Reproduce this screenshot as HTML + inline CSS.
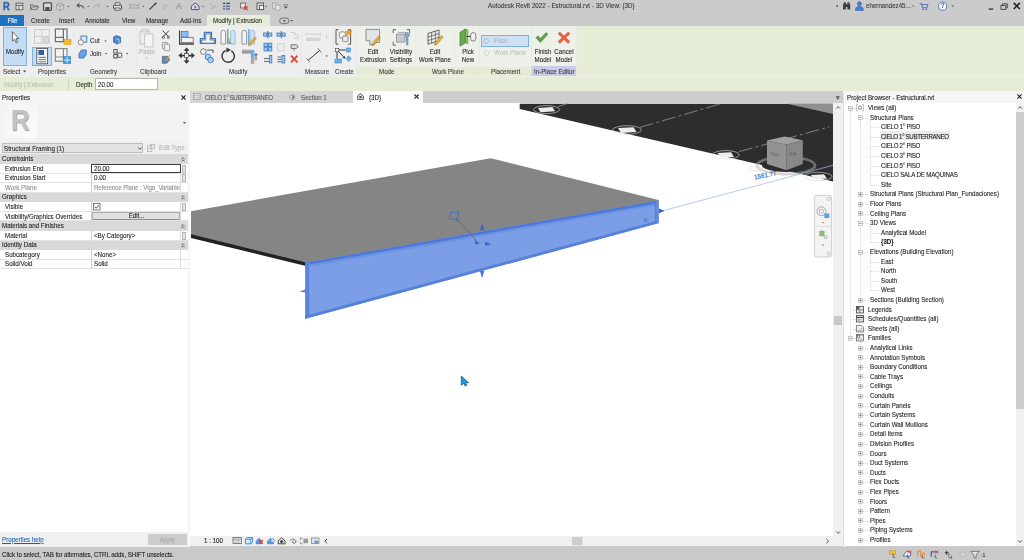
<!DOCTYPE html>
<html lang="en">
<head>
<meta charset="utf-8">
<title>Autodesk Revit 2022 - Estructural.rvt - 3D View: {3D}</title>
<style>
*{box-sizing:border-box;margin:0;padding:0}
html,body{width:1024px;height:560px;overflow:hidden}
body{position:relative;background:#cacaca;font-family:"Liberation Sans","DejaVu Sans",sans-serif;font-size:6.7px;color:#2a2a2a;line-height:8px;-webkit-text-stroke:0.1px}
.x{display:inline-block;transform:scaleX(.925);transform-origin:0 50%}
.xc{display:inline-block;transform:scaleX(.925);transform-origin:50% 50%}
.a{position:absolute;white-space:nowrap}
svg{position:absolute;overflow:visible}
#pb,#props,#status,#vtabs,#vctl,#top{will-change:transform}
#title{left:0;top:0;width:1024px;height:15px;background:#cbcbcb}
#tabs{left:0;top:15px;width:1024px;height:11px;background:#cbcbcb}
#file{left:0;width:24px;height:11px;background:#1b72c4;color:#fff;text-align:center;padding-top:1.5px}
#ctxtab{left:207px;width:63px;height:11px;background:#e7eed8;padding:1.5px 0 0 5.5px}
#ribbon{left:0;top:26px;width:1024px;height:50px;background:#eeeeee}
#ctxbody{left:357px;top:0;width:220px;height:41px;background:#eef1e9}
#ctxlab{left:357px;top:41px;width:667px;height:9px;background:#e5ecd5}
#ctxrest{left:577px;top:0;width:447px;height:50px;background:#e6edd6}
#inplace{left:531px;top:40px;width:45px;height:10px;background:#c9cbe9}
#opts{left:0;top:76px;width:1024px;height:15px;background:#e6edd6;border-top:0.8px solid #eef1e6}
/* properties palette */
#props{left:0;top:91px;width:188px;height:456px;background:#fff}
#props .hd{left:0;top:0;width:188px;height:12px;background:#f5f5f5}
#props .type{left:0;top:12px;width:188px;height:38px;background:#f3f3f3}
#props .sel{left:0;top:50px;width:188px;height:13.4px;background:#f0f0f0}
#props .combo{left:1.6px;top:2.4px;width:141px;height:10px;background:#e2e2e2;border:0.8px solid #bdbdbd;padding:0.4px 0 0 1.6px;color:#1e1e1e}
.grp{left:0;width:188px;height:9.57px;background:#d9d9d9;padding:0.8px 0 0 2px;color:#1e1e1e}
.row{left:0;width:188px;height:9.57px;border-bottom:0.8px solid #e2e2e2;color:#1e1e1e}
.row .k{left:4.6px;top:0.8px;transform:scaleX(.925);transform-origin:0 50%}
.row .v{left:91px;top:0;width:90px;height:9.57px;border-left:0.8px solid #cfcfcf;border-right:0.8px solid #dcdcdc;padding:0.8px 0 0 2px}
.row.dis,.row.dis .k{color:#8e8e8e}
.chev{left:180.6px;top:2.2px;width:4px;height:5px}
.sb{left:182.4px;width:4px;background:#e6e6e6;border:0.6px solid #b4b4b4}
#pfoot{left:0;top:441px;width:188px;height:15px;background:#f0f0f0}
/* view */
#vtabs{left:190px;top:91px;width:653px;height:12px;background:#cdcdcd}
.vt{top:0;height:12px;background:#d5d5d5;color:#5a5a5a}
#view{left:190px;top:103px;width:643.4px;height:433.6px;background:#fff;overflow:hidden}
#vctl{left:190px;top:536.4px;width:652.6px;height:10.2px;background:#f0f0f0}
#vscroll{left:833.4px;top:103px;width:9.2px;height:433.4px;background:#f0f0f0}
#gap1{left:188px;top:91px;width:2.2px;height:456px;background:#f6f6f6}
#gap2{left:842.8px;top:91px;width:2.4px;height:456px;background:linear-gradient(90deg,#e0e0e0 0,#e0e0e0 55%,#fff 55%)}
/* project browser */
#pb{left:845px;top:91px;width:179px;height:454.6px;background:#fff;overflow:hidden}
#pb .hd{left:0;top:0;width:179px;height:11.6px;background:#f6f6f6}
.tr{left:0;height:9.6px;width:171px;color:#1e1e1e}
.tr span{position:absolute;top:1.1px;white-space:nowrap;transform:scaleX(.925);transform-origin:0 50%}
.l1{left:22.8px}.l2{left:25.2px}.l3{left:35.8px}
.bx{top:2.800px;width:4.800px;height:4.800px}
.dot{position:absolute;top:5px;height:0;border-top:0.6px dotted #d6d6d6}
.vd{position:absolute;width:0;border-left:0.6px dotted #dadada}
#status{left:0;top:546.6px;width:1024px;height:13.4px;background:#c9c9c9}
</style>
</head>
<body>
<div id="top" class="a" style="left:0;top:0;width:1024px;height:91px"><div id="title" class="a"></div><div id="tabs" class="a"></div>
<div id="file" class="a" style="top:15px"><span class="xc">File</span></div>
<div id="ctxtab" class="a" style="top:15px"><span class="x">Modify | Extrusion</span></div>
<span class="a x " style="left:30.5px;top:16.6px;color:#2b2b2b">Create</span>
<span class="a x " style="left:59px;top:16.6px;color:#2b2b2b">Insert</span>
<span class="a x " style="left:85px;top:16.6px;color:#2b2b2b">Annotate</span>
<span class="a x " style="left:122px;top:16.6px;color:#2b2b2b">View</span>
<span class="a x " style="left:146px;top:16.6px;color:#2b2b2b">Manage</span>
<span class="a x " style="left:180px;top:16.6px;color:#2b2b2b">Add-Ins</span>
<span class="a x " style="left:488px;top:2.0px;color:#3a3a3a;letter-spacing:0.04px">Autodesk Revit 2022 - Estructural.rvt - 3D View: {3D}</span>
<span class="a x " style="left:866px;top:2.2px;color:#3a3a3a">ehernandez45...</span>
<span class="a " style="left:3px;top:1.6px;font-size:11px;font-weight:bold;color:#2f6db5;-webkit-text-stroke:0.5px #2f6db5;line-height:8px;transform:scaleX(.85);transform-origin:0 0">R</span>
<span class="a x " style="left:175.5px;top:2.0px;font-size:9px;color:#8a8a8a">A</span>
<div id="ribbon" class="a"><div id="ctxbody" class="a"></div><div id="ctxrest" class="a"></div><div id="ctxlab" class="a"></div><div id="inplace" class="a"></div></div>
<div id="opts" class="a"></div>
<div class="a" style="left:3.4px;top:27.4px;width:24px;height:38.8px;background:#c4dcf4;border:0.8px solid #7db1e6"></div>
<span class="a xc " style="left:-14.6px;width:60px;text-align:center;top:48.0px;">Modify</span>
<div class="a" style="left:32px;top:46.8px;width:20.4px;height:18.8px;background:#c4dcf4;border:0.8px solid #7db1e6"></div>
<span class="a x " style="left:90px;top:36.8px;">Cut</span>
<span class="a x " style="left:90px;top:49.6px;">Join</span>
<span class="a xc " style="left:116.80000000000001px;width:60px;text-align:center;top:47.8px;color:#b4b4b4">Paste</span>
<span class="a xc " style="left:342.8px;width:60px;text-align:center;top:48.2px;">Edit</span>
<span class="a xc " style="left:342.8px;width:60px;text-align:center;top:56.0px;">Extrusion</span>
<span class="a xc " style="left:371.2px;width:60px;text-align:center;top:48.2px;">Visibility</span>
<span class="a xc " style="left:371.2px;width:60px;text-align:center;top:56.0px;">Settings</span>
<span class="a xc " style="left:404.8px;width:60px;text-align:center;top:48.2px;">Edit</span>
<span class="a xc " style="left:404.8px;width:60px;text-align:center;top:56.0px;">Work Plane</span>
<span class="a xc " style="left:438.3px;width:60px;text-align:center;top:48.2px;">Pick</span>
<span class="a xc " style="left:438.3px;width:60px;text-align:center;top:56.0px;">New</span>
<span class="a xc " style="left:512.6px;width:60px;text-align:center;top:48.2px;">Finish</span>
<span class="a xc " style="left:512.6px;width:60px;text-align:center;top:56.0px;">Model</span>
<span class="a xc " style="left:534.3px;width:60px;text-align:center;top:48.2px;">Cancel</span>
<span class="a xc " style="left:534.3px;width:60px;text-align:center;top:56.0px;">Model</span>
<div class="a" style="left:481.2px;top:35.4px;width:47.4px;height:11.4px;background:#cfe0f4;border:0.8px solid #7db1e6"></div>
<span class="a x " style="left:494px;top:37.2px;color:#a9b6c6">Face</span>
<span class="a x " style="left:494.2px;top:48.8px;color:#c0c4bc">Work Plane</span>
<span class="a x " style="left:3.3px;top:68.0px;color:#3c3c3c">Select</span>
<span class="a x " style="left:38px;top:68.0px;color:#3c3c3c">Properties</span>
<span class="a x " style="left:90px;top:68.0px;color:#3c3c3c">Geometry</span>
<span class="a x " style="left:139.5px;top:68.0px;color:#3c3c3c">Clipboard</span>
<span class="a x " style="left:228.5px;top:68.0px;color:#3c3c3c">Modify</span>
<span class="a x " style="left:304.5px;top:68.0px;color:#3c3c3c">Measure</span>
<span class="a x " style="left:334.7px;top:68.0px;color:#3c3c3c">Create</span>
<span class="a x " style="left:378.5px;top:68.0px;color:#3c3c3c">Mode</span>
<span class="a x " style="left:432px;top:68.0px;color:#3c3c3c">Work Plane</span>
<span class="a x " style="left:490.5px;top:68.0px;color:#3c3c3c">Placement</span>
<span class="a x " style="left:533.5px;top:68.0px;color:#3c3c3c">In-Place Editor</span>
<span class="a x " style="left:4px;top:81.0px;color:#b9c0ad">Modify | Extrusion</span>
<div class="a" style="left:68px;top:79px;width:1px;height:11px;background:#cfd6c2"></div>
<span class="a x " style="left:76px;top:81.0px;">Depth</span>
<div class="a" style="left:94.5px;top:78px;width:63.600px;height:12.400px;background:#fff;border:0.8px solid #b5b5b5;padding:2.200px 0 0 2px"><span class="x">20.00</span></div>
<svg style="left:0;top:0" width="1024" height="91" viewBox="0 0 1024 91">
<g fill="none" stroke="#5a5a5a" stroke-width="0.9">
<rect x="16" y="3.2" width="6.8" height="6.6" fill="#e6e6e6"/><path d="M16 5.4h6.8M19 5.4v4.4"/>
<path d="M30.6 9.4v-4.6h2.6l1 1h3.4v1M30.6 9.4l1.8-2.6h6.4l-1.8 2.6z" stroke="#6a6a6a"/>
<rect x="43.6" y="2.8" width="7.8" height="7.6" rx="0.8" stroke="#4c4c5c" stroke-width="1.3" fill="#dcdcdc"/><rect x="45.4" y="7" width="4.2" height="3.4" fill="#4c4c5c" stroke="none"/>
<path d="M56.5 4.6l3.6-1.4 3.6 1.4v4.2l-3.6 1.6-3.6-1.6z M56.5 4.6l3.6 1.4 3.6-1.4M60.1 6v4.4" stroke="#9a9a9a" fill="#d8d8d8"/>
<path d="M83.6 8.6c0-3-3-3.6-6-3.2M79.4 3.4l-2.4 2 2.6 1.8" stroke="#555" stroke-width="1.1"/>
<path d="M93.4 8.6c0-3 3-3.6 6-3.2M97.6 3.4l2.4 2-2.6 1.8" stroke="#b4b4b4" stroke-width="1.1"/>
<rect x="113.6" y="5.2" width="8" height="4" rx="0.8" fill="#e4e4e4" stroke="#4a4a4a" stroke-width="1"/><rect x="115.2" y="2.8" width="4.8" height="2.4" fill="#f4f4f4"/><rect x="115.2" y="8" width="4.8" height="2.2" fill="#f4f4f4"/>
<path d="M130 5h8.600M130 8h8.600M130 3.600v5.400M138.600 3.600v5.400" stroke="#9c9c9c" stroke-width="0.8"/>
<path d="M149.4 9.6l6.4-6.4" stroke="#444" stroke-width="1.3"/><circle cx="155.6" cy="3.6" r="1" fill="#444" stroke="none"/>
<path d="M162.6 9.4l2-5 3 1.4z" stroke="#b0b0b0"/>
<path d="M191.4 6l3.8-3 3.8 3v3.6h-7.6z" stroke="#4a4a4a" fill="#dedede"/><circle cx="195.2" cy="7" r="1.5" fill="#6a8fd0" stroke="none"/>
<path d="M210.4 3.6l3 3-3 3M213.4 6.6h3" stroke="#a6a6a6"/>
<path d="M223 3.4h2.2M226.6 3.4h3.4M223 6.2h2.2M226.6 6.2h3.4M223 9h2.2M226.6 9h3.4" stroke="#3c3c3c" stroke-width="1.1"/><path d="M226.700 2.400v8" stroke="#4a90e0" stroke-width="0.800"/>
<rect x="240.6" y="3" width="5" height="5" stroke="#666" fill="#e4e4e4"/><path d="M244 6.4l3.6 3.6M247.6 6.4l-3.6 3.6" stroke="#d83a2a" stroke-width="1.2"/>
<rect x="257" y="3" width="6.6" height="6.6" stroke="#555" fill="#e2e2e2"/><rect x="259.4" y="5.4" width="4.2" height="4.2" fill="#f4f4f4" stroke="#555"/>
<rect x="272.6" y="3" width="4.6" height="5.4" stroke="#a8a8a8" fill="#dcdcdc"/><rect x="275.4" y="5.2" width="4.6" height="5" stroke="#a8a8a8" fill="#e6e6e6"/>
</g>
<g fill="#555">
<circle cx="68.6" cy="6.4" r="0.7"/>
<circle cx="88.2" cy="6.4" r="0.7"/>
<circle cx="107.4" cy="6.4" r="0.7"/>
<circle cx="143.4" cy="6.4" r="0.7"/>
<circle cx="203" cy="6.4" r="0.7"/>
<circle cx="266.4" cy="6.4" r="0.7"/>
<path d="M283.4 4.4h4.6v0.9h-4.6z M283.6 6.4h4.2l-2.1 2.4z"/>
</g>
<g fill="#3c3c3c">
<path d="M837.6 4.4v3l-1.6-1.5z"/>
<path d="M843 5.4l1-3.2h1.6l0.4 2h1.2l0.4-2h1.6l1 3.2v4.2h-2.8v-2.6h-1.6v2.6h-2.8z"/>
<path d="M912 5.4h2.4l-1.2 1.6zM951.6 5.4h2.4l-1.2 1.6z" fill="#555"/>
<rect x="988.6" y="8.4" width="4.6" height="1.4"/>
<path d="M1013.2 3.4l1.1-1.1 2.5 2.5 2.5-2.5 1.1 1.1-2.5 2.5 2.5 2.5-1.1 1.1-2.5-2.5-2.5 2.5-1.1-1.1 2.5-2.5z" fill="#222"/>
</g>
<g fill="none" stroke="#444" stroke-width="0.9"><rect x="1001" y="5.4" width="4.8" height="4"/><path d="M1002.6 5.4v-1.6h4.8v4h-1.6"/></g>
<circle cx="859.4" cy="3.8" r="2" fill="#4a7fd0" stroke="#2a55a8" stroke-width="0.5"/><path d="M855.4 10.4c0-3.4 2-4.2 4-4.2s4 0.8 4 4.2z" fill="#4a7fd0" stroke="#2a55a8" stroke-width="0.5"/>
<path d="M919.6 3.4h1.6l1.4 4.4h4.4l1-3.2h-6" fill="none" stroke="#3a6ab8" stroke-width="0.9"/><circle cx="923" cy="9.4" r="0.8" fill="#3a6ab8"/><circle cx="926.4" cy="9.4" r="0.8" fill="#3a6ab8"/>
<circle cx="942.6" cy="6.2" r="4.1" fill="#f4f6fa" stroke="#3a62b0" stroke-width="0.8"/><text x="942.6" y="8.400" font-size="6.400" font-weight="bold" fill="#2a5db0" text-anchor="middle">?</text>
<rect x="279.6" y="18" width="9.4" height="5.6" rx="2.8" fill="none" stroke="#555" stroke-width="0.7"/><circle cx="284.3" cy="20.8" r="1" fill="#555"/><path d="M290.6 20h2.4l-1.2 1.6z" fill="#333"/>
<rect x="29.6" y="28" width="0.7" height="47" fill="#e6e6e6"/>
<rect x="73.6" y="28" width="0.7" height="47" fill="#e6e6e6"/>
<rect x="136.4" y="28" width="0.7" height="47" fill="#e6e6e6"/>
<rect x="173.6" y="28" width="0.7" height="47" fill="#e6e6e6"/>
<rect x="300.8" y="28" width="0.7" height="47" fill="#e6e6e6"/>
<rect x="333" y="28" width="0.7" height="47" fill="#e6e6e6"/>
<rect x="356.4" y="28" width="0.7" height="47" fill="#e6e6e6"/>
<rect x="415.4" y="28" width="0.7" height="47" fill="#e6e6e6"/>
<rect x="455.4" y="28" width="0.7" height="47" fill="#e6e6e6"/>
<rect x="479" y="28" width="0.7" height="47" fill="#e6e6e6"/>
<rect x="531" y="28" width="0.7" height="47" fill="#e6e6e6"/>
<rect x="576.4" y="28" width="0.7" height="47" fill="#e6e6e6"/>
<path d="M23 70.4h3.2l-1.6 2.2z" fill="#444"/>
<path d="M12.4 31.6v9.6l2.2-2 1.6 3.6 1.4-0.6-1.6-3.6h3z" fill="#fff" stroke="#444" stroke-width="0.8" stroke-linejoin="round"/>
<g fill="none" stroke="#c4c4c4" stroke-width="0.8"><rect x="34.4" y="29.6" width="14.8" height="13.6" fill="#efefef"/><path d="M34.4 36.4h14.8M41.8 29.6v13.6"/><rect x="43.4" y="37.8" width="5" height="4.4" fill="#dcdcdc"/></g>
<g fill="#f2f2f2" stroke="#6e6e6e" stroke-width="1.2"><rect x="55.4" y="29" width="11.6" height="12.6"/><path d="M55.4 37.4h8M63.4 29v12.6" fill="none"/></g><rect x="64" y="39.4" width="7" height="5" fill="#f4b932" stroke="#d89a18" stroke-width="0.6"/>
<rect x="36.8" y="48.4" width="10.8" height="15.4" fill="#f6f6f6" stroke="#555" stroke-width="0.9"/><rect x="38.4" y="50" width="5.6" height="5" fill="#2f5fa8"/><path d="M38.6 57.4h7.4M38.6 59.6h7.4M38.6 61.8h7.4" stroke="#555" stroke-width="0.8"/>
<g fill="#f2f2f2" stroke="#8a8a8a" stroke-width="1.2"><rect x="55.4" y="48.6" width="11.6" height="12.6"/><path d="M55.4 57h8M63.4 48.6v12.6" fill="none"/></g><rect x="63.6" y="56.6" width="7" height="7" fill="#4a9ae0" stroke="#2a78c8" stroke-width="0.6"/><path d="M67.1 56.6v7M63.6 60.1h7" stroke="#dff" stroke-width="0.8"/>
<rect x="81" y="36" width="5.8" height="6.2" fill="#dce8f6" stroke="#3a78c8" stroke-width="0.9"/><circle cx="80.8" cy="42.4" r="2.6" fill="#f4f4f4" stroke="#666" stroke-width="0.7"/>
<path d="M79 53.6l2.4-3.6h4.8v4.6l-2.4 3.4h-4.8z" fill="#6aa2e0" stroke="#2a68b8" stroke-width="0.8"/>
<path d="M104.4 40.6h2.2l-1.1 1.5z M105 53h2.2l-1.1 1.5z M126 53h2.2l-1.1 1.5z" fill="#444"/>
<path d="M113.6 37l3-1.4 4 1.6v5.4l-3.4 1.4-3.6-1.8z" fill="#4a88d0" stroke="#2a5aa0" stroke-width="0.7"/><path d="M116 38.6l3 1v3.6" stroke="#dfeaf8" fill="none" stroke-width="0.7"/>
<g fill="none" stroke="#444" stroke-width="0.9"><rect x="113.8" y="49.6" width="3.4" height="3.4"/><rect x="113.8" y="54.6" width="3.4" height="3.4"/><rect x="117.8" y="53" width="4" height="4.4" rx="1"/></g>
<g fill="#ededed" stroke="#c2c2c2" stroke-width="0.9"><rect x="140" y="31" width="9.6" height="13"/><rect x="144.6" y="34" width="8.4" height="13" fill="#f4f4f4"/><rect x="142.4" y="29.4" width="4.8" height="2.6"/></g><path d="M145.4 57.4h2.2l-1.1 1.5z" fill="#b8b8b8"/>
<path d="M162.6 30.6l6.4 6.6M169 30.6l-6.4 6.6" stroke="#333" stroke-width="0.9"/><circle cx="163.4" cy="37.4" r="1.1" fill="none" stroke="#333" stroke-width="0.7"/><circle cx="168.4" cy="37.4" r="1.1" fill="none" stroke="#333" stroke-width="0.7"/>
<g fill="#e6e6e6" stroke="#8a8a8a" stroke-width="0.8"><rect x="162.4" y="42.4" width="5" height="6.4" rx="0.6"/><rect x="164.6" y="44.2" width="5" height="6.4" rx="0.6" fill="#f2f2f2"/></g>
<path d="M162.4 56.4h5l2.4 3.4-3 3.4h-4.4z" fill="#5a8ad0" stroke="#444" stroke-width="0.6"/><path d="M166.4 61l3.4-5.6" stroke="#d8a020" stroke-width="1.2"/>
<path d="M179.6 30.4v13.6h14.4" fill="none" stroke="#444" stroke-width="1.3"/><rect x="181.6" y="31.4" width="6.4" height="5.6" fill="#8cc0f0" stroke="#3a78c8" stroke-width="0.7"/><rect x="181.6" y="37.6" width="11.6" height="5" fill="#f4f4f4" stroke="#666" stroke-width="0.8"/>
<path d="M200.4 43.4v-4.8h4v-6.2h7v6.2h4v4.8z" fill="#f2f2f2" stroke="#3a78c8" stroke-width="1.4" stroke-linejoin="round"/><path d="M201.6 43.4v-3.4h4.2v-6.2h4.4v6.2h4.2v3.4" fill="none" stroke="#555" stroke-width="0.7"/>
<path d="M221 44v-11.400a2.300 2.300 0 0 1 4.600 0v11.400z" fill="#f4f4f4" stroke="#8a8a8a" stroke-width="0.900"/><path d="M230.600 44v-11.400a2.300 2.300 0 0 1 4.600 0v11.400z" fill="#cfe2f4" stroke="#9ab8d8" stroke-width="0.900"/><path d="M227.800 29v15.600" stroke="#5aa85a" stroke-width="1.200"/><path d="M229 38.400v5l1.200-1 0.900 1.800" fill="none" stroke="#444" stroke-width="0.600"/>
<path d="M242 44v-11.400a2.300 2.300 0 0 1 4.600 0v11.400z" fill="#f4f4f4" stroke="#8a8a8a" stroke-width="0.900"/><path d="M250 44v-11.400a2.300 2.300 0 0 1 4.600 0v11.400z" fill="#cfe2f4" stroke="#9ab8d8" stroke-width="0.900"/><path d="M248.800 29v15.400" stroke="#5a9ee0" stroke-width="1.200"/><path d="M249 43.800l5.800-6.800 1.600 1.400-5.800 6.800-2.200 0.600z" fill="#f0b030" stroke="#8a6a20" stroke-width="0.400"/>
<g fill="#333"><path d="M186.6 47.4l3 3.4h-6zM186.6 63.8l3-3.4h-6zM178.4 55.6l3.4-3v6zM194.8 55.6l-3.4-3v6z"/><rect x="185.8" y="50" width="1.6" height="11.2"/><rect x="181" y="54.8" width="11.2" height="1.6"/></g><rect x="184.6" y="53.6" width="4" height="4" fill="#f2f2f2" stroke="#333" stroke-width="0.6"/>
<circle cx="203.4" cy="51.6" r="2.8" fill="#f4f4f4" stroke="#555" stroke-width="0.8"/><circle cx="208" cy="57" r="2.8" fill="#a8d0f4" stroke="#3a78c8" stroke-width="0.9"/><circle cx="210.6" cy="60" r="2.8" fill="#a8d0f4" stroke="#3a78c8" stroke-width="0.9"/><path d="M207 50h6v3" fill="none" stroke="#333" stroke-width="0.8"/>
<path d="M231.400 50.800a6.200 6.200 0 1 1 -5.600-0.400" fill="none" stroke="#3c3c3c" stroke-width="1.500"/><path d="M226.400 47.600l4.600 2.400-4.600 2.600z" fill="#3c3c3c"/>
<rect x="242" y="50.800" width="9.400" height="2.800" fill="#9a9a9a"/><path d="M242 50.200h9.400" stroke="#666" stroke-width="0.600"/><rect x="250.800" y="50" width="3.600" height="8" fill="#6ab0e8"/><rect x="250.800" y="58" width="3.600" height="5.800" fill="#a8a8a8"/><path d="M256 60.400v-6.600M254.600 55.400l1.400-1.800 1.400 1.800" stroke="#333" stroke-width="0.800" fill="none"/>
<g stroke-width="0.8">
<rect x="263.6" y="33" width="3.200" height="3.200" fill="#9cc8f4" stroke="#3a78c8"/><rect x="268.600" y="33" width="3.200" height="3.200" fill="#9cc8f4" stroke="#3a78c8"/><path d="M267.800 31v7.400" stroke="#444"/>
<rect x="277" y="33" width="3.200" height="3.200" fill="#9cc8f4" stroke="#3a78c8"/><rect x="282" y="33" width="3.200" height="3.200" fill="#9cc8f4" stroke="#3a78c8"/><path d="M281.200 31v7.400" stroke="#444"/>
<path d="M291 32.400h4v2.400h3v3.400h-4.400" fill="none" stroke="#c6c6c6"/>
<g fill="#9cc8f4" stroke="#3a78c8"><rect x="264" y="43.200" width="3.400" height="3.400"/><rect x="268.400" y="43.200" width="3.400" height="3.400"/><rect x="264" y="47.600" width="3.400" height="3.400"/><rect x="268.400" y="47.600" width="3.400" height="3.400"/></g>
<rect x="277.400" y="43.400" width="7" height="7.400" fill="#ececec" stroke="#cfcfcf"/>
<path d="M291 44.800h5.600l1.400 1.800-1.400 1.800h-5.600z M294 48.400v2.400" fill="#e2e2e2" stroke="#555"/>
<path d="M264 58.600h5M264 61.400h5" stroke="#444"/><rect x="269.400" y="55.400" width="2.400" height="7.600" fill="#9cc8f4" stroke="#3a78c8"/>
<path d="M277.400 57h4M277.400 59.400h4M277.400 61.800h4" stroke="#444"/><rect x="282" y="55.400" width="2.800" height="7.600" fill="#9cc8f4" stroke="#3a78c8"/>
<path d="M291 55.600l6.400 6.800M297.400 55.600l-6.400 6.800" stroke="#e03a2a" stroke-width="1.700"/>
</g>
<path d="M306 34.200h14.400" stroke="#c6c6c6" stroke-width="0.800"/><path d="M306 32.600v3.200M320.400 32.600v3.200" stroke="#c6c6c6" stroke-width="0.700"/><rect x="306" y="37.600" width="14.600" height="3.400" fill="#d4d4d4"/><circle cx="326.600" cy="36.800" r="0.600" fill="#888"/>
<path d="M308.200 60.200l11.600-9.800" stroke="#333" stroke-width="1"/><path d="M306.400 58l3.600 4.400M317.800 48.200l3.600 4.400" stroke="#444" stroke-width="0.700"/><path d="M325.600 55.600h2.200l-1.100 1.500z" fill="#444"/>
<path d="M338.400 29.600h-2.400v14.600h2.400M348.200 29.600h2.400v14.600h-2.400" fill="none" stroke="#555" stroke-width="1"/><circle cx="342.400" cy="35" r="3.400" fill="#f4f4f4" stroke="#777" stroke-width="0.800"/><rect x="342.600" y="36" width="5.400" height="5.600" rx="1" fill="#ececec" stroke="#777" stroke-width="0.800"/><path d="M348.400 29l1.200 2 2.200 0.400-1.600 1.600 0.400 2.200-2.200-1-2 1 0.400-2.200-1.600-1.600 2.200-0.400z" fill="#f4a020" stroke="#e07810" stroke-width="0.400"/>
<rect x="335.400" y="48.400" width="3.400" height="3.400" fill="#f4f4f4" stroke="#555" stroke-width="0.700"/><rect x="346.400" y="48" width="4" height="4" fill="#6ab0ec" stroke="#3a88d0" stroke-width="0.600"/><rect x="335" y="59" width="6.400" height="4" fill="#6ab0ec" stroke="#3a88d0" stroke-width="0.600"/><path d="M348.600 55.800l2.600 2.800-2.600 2.800-2.600-2.800z" fill="#6ab0ec" stroke="#3a88d0" stroke-width="0.600"/><path d="M338.800 50h7M337 52v6.600M338.600 51.600l5.600 6" stroke="#222" stroke-width="0.900"/><path d="M345.400 58.600l-2.800-0.600 2-2z" fill="#222"/>
<path d="M366 29.400h13.600v13h-3.600l-1.600 2.400h-4.600v-4h-3.800z" fill="#e1e4ea" stroke="#777" stroke-width="0.800"/><path d="M372.400 43.400l6.400-7.600 1.800 1.600-6.400 7.400-2.400 0.800z" fill="#f0b030" stroke="#8a6a20" stroke-width="0.500"/>
<g fill="none" stroke="#555" stroke-width="0.900"><path d="M396 29.600h-2.800v3.600M406.800 29.600h2.800v3.600M396 45.200h-2.800v-3.600"/></g><path d="M396.400 34.600l2-2h8v7.400l-2 2h-8z" fill="#d4d8e0" stroke="#888" stroke-width="0.700"/><rect x="396.400" y="34.600" width="8" height="7.400" fill="#c4cad4" stroke="#888" stroke-width="0.500"/><path d="M405.600 36.400a2.200 2.200 0 1 1 3.200 0l-0.800 1v7.600h-1.600v-7.600z" fill="#8aa8cc" stroke="#5a7aa8" stroke-width="0.500"/>
<path d="M428 33.400l11-3.400v10.600l-11 3.600z" fill="#ececec" stroke="#555" stroke-width="0.900"/><path d="M431.600 32.400v10.600M435.400 31.200v10.600M428 37l11-3.400M428 40.600l11-3.400" stroke="#555" stroke-width="0.700"/><path d="M435 42.800l6.400-7.400 1.800 1.600-6.400 7.400-2.400 0.800z" fill="#f0b030" stroke="#8a6a20" stroke-width="0.500"/>
<path d="M460 32.400l5.400-3.400v13.800l-5.400 3.400z" fill="#6aa84f" stroke="#3d7a2a" stroke-width="0.700"/><path d="M465.400 29l2.400 1v13.600l-2.400-0.800z" fill="#8cc46c" stroke="#3d7a2a" stroke-width="0.600"/><path d="M466.600 36.400h4" stroke="#222" stroke-width="0.900"/><rect x="470.600" y="32.600" width="5.200" height="8.400" rx="2.400" fill="#f0f0f0" stroke="#666" stroke-width="0.800"/>
<circle cx="486" cy="41.200" r="2.400" fill="none" stroke="#a9b6c6" stroke-width="0.800"/><circle cx="486.600" cy="52.800" r="2.400" fill="none" stroke="#cdd0c8" stroke-width="0.800"/>
<path d="M535.800 37.800l2.200-2 2.400 2.600 5.600-6 2 1.800-7.600 8.400z" fill="#5d9c48" stroke="#3f7a30" stroke-width="0.400"/>
<path d="M558 33.800l1.800-1.800 4.200 4 4.200-4 1.800 1.800-4.200 3.800 4.200 4-1.800 1.800-4.200-4-4.200 4-1.800-1.800 4.200-4z" fill="#e8603c" stroke="#c84424" stroke-width="0.400"/>
</svg>
</div>
<div id="props" class="a">
<div class="a hd"><span class="a x" style="left:2px;top:2.8px;color:#1e1e1e">Properties</span>
<svg style="left:180.800px;top:4.200px" width="5" height="5" viewBox="0 0 5 5"><path d="M0.4 0.4L4.6 4.600M4.600 0.400L0.400 4.600" stroke="#222" stroke-width="1.1"/></svg></div>
<div class="a type"><div class="a" style="left:4px;top:1.800px;width:33.400px;height:33.400px;background:linear-gradient(135deg,#f4f4f4,#fbfbfb)"></div>
<span class="a" style="left:11.400px;top:4.800px;font-size:30px;line-height:24px;font-weight:bold;color:#c2c2c2;transform:scaleX(.86);transform-origin:0 0;text-shadow:0.6px 0.6px 1px #999">R</span>
<svg style="left:183px;top:19px" width="3" height="2" viewBox="0 0 3 2"><path d="M0 0h3L1.500 2z" fill="#555"/></svg></div>
<div class="a sel"><div class="a combo"><span class="x">Structural Framing (1)</span></div>
<svg style="left:137.600px;top:6px" width="4" height="3" viewBox="0 0 4 3"><path d="M0.300 0.500L2 2.300 3.700 0.500" fill="none" stroke="#333" stroke-width="0.800"/></svg>
<svg style="left:147.400px;top:3.400px" width="8" height="8" viewBox="0 0 8 8"><g fill="none" stroke="#b9b9b9" stroke-width="0.800"><rect x="0.400" y="1.400" width="4.400" height="6"/><rect x="3.400" y="0.400" width="4.200" height="4"/><path d="M0.400 4.400h4.400"/></g></svg>
<span class="a x" style="left:158.600px;top:3.200px;color:#b4b4b4">Edit Type</span></div>
<div class="a grp" style="top:63.40px"><span class="x">Constraints</span><svg class="chev" viewBox="0 0 4 5"><path d="M0.4 2.2L2 0.6 3.600 2.200M0.400 4.400L2 2.800 3.600 4.400" fill="none" stroke="#333" stroke-width="0.7"/></svg></div>
<div class="a row" style="top:72.97px"><span class="a k">Extrusion End</span><span class="a v"><span class="x"></span></span></div>
<div class="a row" style="top:82.54px"><span class="a k">Extrusion Start</span><span class="a v"><span class="x">0.00</span></span></div>
<div class="a row dis" style="top:92.11px"><span class="a k">Work Plane</span><span class="a v"><span class="x"><span style="letter-spacing:-0.12px">Reference Plane : Viga_Variable</span></span></span></div>
<div class="a grp" style="top:101.68px"><span class="x">Graphics</span><svg class="chev" viewBox="0 0 4 5"><path d="M0.4 2.2L2 0.6 3.600 2.200M0.400 4.400L2 2.800 3.600 4.400" fill="none" stroke="#333" stroke-width="0.7"/></svg></div>
<div class="a row" style="top:111.25px"><span class="a k">Visible</span><span class="a v"><span class="x"></span></span></div>
<div class="a row" style="top:120.82px"><span class="a k">Visibility/Graphics Overrides</span><span class="a v"><span class="x"></span></span></div>
<div class="a grp" style="top:130.39px"><span class="x">Materials and Finishes</span><svg class="chev" viewBox="0 0 4 5"><path d="M0.4 2.2L2 0.6 3.600 2.200M0.400 4.400L2 2.800 3.600 4.400" fill="none" stroke="#333" stroke-width="0.7"/></svg></div>
<div class="a row" style="top:139.96px"><span class="a k">Material</span><span class="a v"><span class="x">&lt;By Category&gt;</span></span></div>
<div class="a grp" style="top:149.53px"><span class="x">Identity Data</span><svg class="chev" viewBox="0 0 4 5"><path d="M0.4 2.2L2 0.6 3.600 2.200M0.400 4.400L2 2.800 3.600 4.400" fill="none" stroke="#333" stroke-width="0.7"/></svg></div>
<div class="a row" style="top:159.10px"><span class="a k">Subcategory</span><span class="a v"><span class="x">&lt;None&gt;</span></span></div>
<div class="a row" style="top:168.67px"><span class="a k">Solid/Void</span><span class="a v"><span class="x">Solid</span></span></div>
<div class="a" style="left:91.400px;top:72.77px;width:89.200px;height:9.400px;border:0.9px solid #3c3c3c;background:#fff;padding:0.4px 0 0 1.4px;color:#1e1e1e"><span class="x">20.00</span></div>
<div class="a sb" style="top:73.57px;height:8px"></div><div class="a sb" style="top:83.14px;height:8px"></div>
<div class="a sb" style="top:112.25px;height:7.600px"></div><div class="a sb" style="top:140.96px;height:7.600px"></div>
<svg style="left:93.400px;top:112.35px" width="7.400" height="7.400" viewBox="0 0 7.400 7.400"><rect x="0.400" y="0.400" width="6.600" height="6.600" fill="#fff" stroke="#444" stroke-width="0.700"/><path d="M1.700 3.700l1.500 1.600 2.700-3.300" fill="none" stroke="#333" stroke-width="0.800"/></svg>
<div class="a" style="left:92px;top:121.22px;width:88.400px;height:8.200px;background:#e1e1e1;border:0.7px solid #adadad;border-bottom-color:#8e8e8e;text-align:center;line-height:6px;color:#1e1e1e"><span class="xc">Edit...</span></div>
<div id="pfoot" class="a"><span class="a x" style="left:2px;top:3.800px;color:#1a5fb4;text-decoration:underline">Properties help</span><div class="a" style="left:148px;top:2px;width:38.600px;height:11.400px;background:#cccccc;color:#a4a4a4;text-align:center;padding-top:1.800px"><span class="xc">Apply</span></div></div>
</div>
<div id="gap1" class="a"></div>
<div id="vtabs" class="a">
<div class="a vt" style="left:0;width:95.600px"><span class="a x" style="left:14.800px;top:2.600px;letter-spacing:-0.4px">CIELO 1° SUBTERRANEO</span>
<svg style="left:3.200px;top:2.400px" width="7.600" height="7" viewBox="0 0 7.600 7"><rect x="0.400" y="0.400" width="6.800" height="6.200" fill="#dcdcdc" stroke="#9a9a9a" stroke-width="0.700"/><path d="M0.400 2.400h6.800M0.400 4.400h6.800" stroke="#aaa" stroke-width="0.500"/></svg></div>
<div class="a vt" style="left:96.200px;width:66.600px"><span class="a x" style="left:14.400px;top:2.600px">Section 1</span>
<svg style="left:2.400px;top:2.600px" width="6.400" height="6.400" viewBox="0 0 6.400 6.400"><circle cx="3.200" cy="3.200" r="2.500" fill="#e4e4e4" stroke="#8a8a8a" stroke-width="0.700"/><path d="M3.200 0.700L5.700 3.200 3.200 5.700z" fill="#777"/></svg></div>
<div class="a" style="left:163.400px;top:0;width:69.200px;height:12px;background:#fff;color:#1e1e1e"><span class="a x" style="left:15.800px;top:2.600px">{3D}</span>
<svg style="left:3.200px;top:2.400px" width="7" height="7" viewBox="0 0 7 7"><path d="M0.600 3l2.900-2.400L6.400 3v3.400H0.600z" fill="#e8e8e8" stroke="#333" stroke-width="0.800"/><circle cx="3.500" cy="4" r="1.300" fill="#555"/></svg>
<svg style="left:60.400px;top:3.400px" width="5.200" height="5.200" viewBox="0 0 5.200 5.200"><path d="M0.500 0.500L4.700 4.700M4.700 0.500L0.500 4.700" stroke="#222" stroke-width="1.100"/></svg></div>
<svg style="left:646px;top:5px" width="3.600" height="4.400" viewBox="0 0 4 5"><path d="M0 0h4v0.900H0zM0 1.800h4L2 4.400z" fill="#444"/></svg>
</div>
<div id="view" class="a">
<svg style="left:0;top:0" width="643" height="432" viewBox="190 103 643 432">
<!-- far dark slab -->
<polygon points="519.7,103.700 833.400,103.700 833.400,181.5 519.7,109" fill="#2d2d2d"/>
<polygon points="787,103.700 833.400,103.700 833.400,114.2" fill="#909090"/>
<g fill="none" stroke="#d8d8d8" stroke-width="0.6">
<ellipse cx="546.6" cy="109.6" rx="13" ry="4"/>
<ellipse cx="627" cy="130" rx="14.5" ry="4.3"/>
<ellipse cx="725.8" cy="154.8" rx="13.5" ry="4.2"/>
<ellipse cx="818" cy="176.5" rx="14" ry="4.2"/>
</g>
<g fill="#ececec">
<polygon points="538,108 552.5,107 555,111.3 540.5,112.3"/>
<polygon points="618,128 633.5,127.2 636.5,132 621,133"/>
<polygon points="717.5,153 731,152.2 734,157 720.5,157.6"/>
<polygon points="811,175 824,174.2 827,178.6 814,179.4"/>
</g>
<g stroke="#a4a4a4" stroke-width="0.7" stroke-dasharray="14 3 3 3">
<line x1="558" y1="106.6" x2="568" y2="103.4"/>
<line x1="640" y1="127.4" x2="722" y2="103.4"/>
<line x1="739" y1="151.6" x2="829" y2="127"/>
</g>
<!-- view cube -->
<ellipse cx="786" cy="165.5" rx="29" ry="8.5" fill="none" stroke="#b0b0b0" stroke-width="2.8" opacity="0.5"/>
<ellipse cx="786" cy="165.5" rx="24" ry="6.4" fill="#2d2d2d"/>
<polygon points="767,140.5 784.5,136.6 802.8,140.3 786.5,144.8" fill="#a0a0a0"/>
<polygon points="767,140.5 786.5,144.8 786.5,170.2 767,164" fill="#939393"/>
<polygon points="786.5,144.8 802.8,140.3 802.8,164 786.5,170.2" fill="#888888"/>
<text x="769.8" y="155.3" font-size="4.6" font-weight="bold" fill="#6f6f6f" transform="rotate(8 770 155)">TOP</text>
<text x="789.8" y="156" font-size="4.6" font-weight="bold" fill="#6a6a6a" transform="rotate(-10 790 156)">RIE</text>
<!-- white cover below dark edge (compass pieces) -->
<ellipse cx="756" cy="168.5" rx="7" ry="2.4" fill="none" stroke="#e2e2e2" stroke-width="1"/>
<!-- main slab -->
<polygon points="191,211.2 490.7,158.2 658.6,200.1 658.6,201.4 306,264 191,235.2" fill="#858585"/>
<polygon points="191,234.2 306,262.6 306,266 191,238" fill="#222"/>
<!-- beam -->
<polygon points="305.3,262.6 655.4,201 658.7,200.2 658.7,223.2 655.4,224 305.3,318.8" fill="#7b9ee6"/>
<polygon points="305.3,262.6 655.4,201 655.4,204 305.3,265.400" fill="#4f79d8"/>
<polygon points="305.3,265.400 655.4,204 655.4,205.400 305.3,267.600" fill="#6c92e2"/>
<polygon points="305.3,262.6 309.3,262 309.3,317.6 305.3,318.8" fill="#5a83da"/>
<polygon points="305.3,315.800 655.4,221.200 655.4,224 305.3,318.8" fill="#5680da"/>
<polygon points="655.2,201 658.7,200.2 658.7,223.2 655.2,224" fill="#5f88de"/>
<line x1="655.400" y1="201" x2="655.400" y2="224" stroke="#4a74d4" stroke-width="0.600"/>
<circle cx="645.7" cy="220" r="1.5" fill="none" stroke="#3e69c8" stroke-width="0.700"/>
<!-- dimension line -->
<line x1="661" y1="211.2" x2="833.400" y2="165.2" stroke="#9db8ec" stroke-width="0.75"/>
<polygon points="659,208.6 664.5,211 659,213.2" fill="#3a66c8"/>
<polygon points="299.6,291.8 306,289 306,292.4" fill="#5a83da"/>
<text x="754.4" y="179.4" font-size="6.3" fill="#3a66c4" stroke="#3a66c4" stroke-width="0.15" transform="rotate(-10.5 754.4 179.4)">1561.77</text>
<!-- controls -->
<polygon points="450.6,212.2 458.6,212.2 457,219 449.4,219" fill="none" stroke="#3a6ad0" stroke-width="0.8"/>
<circle cx="457.4" cy="220.1" r="1.2" fill="#3a6ad0"/>
<line x1="457.4" y1="220.1" x2="477.8" y2="242.1" stroke="#5a5a5a" stroke-width="0.7"/>
<polygon points="482.1,223.6 484.4,230.2 479.8,230.2" fill="#3a66c8"/>
<polygon points="482.1,278.2 484.4,270.7 479.8,270.7" fill="#4a74d2"/>
<polygon points="474.4,240.2 479.6,243.8 475.4,244.4" fill="#3a66c8"/>
<polygon points="485,241.4 491.2,244.4 485.2,245.8" fill="#3a66c8"/>
<!-- mouse cursor -->
<polygon points="461.3,376 461.3,385.3 463.6,383.4 465.3,386 466.8,385.2 465.4,382.8 468.6,382.8" fill="#1a9de8" stroke="#1f3f7a" stroke-width="0.7" stroke-linejoin="round"/>
<!-- navigation bar -->
<rect x="814.4" y="195.4" width="17.2" height="61.6" rx="2.2" fill="#f3f3f3" stroke="#bcbcbc" stroke-width="0.7"/>
<circle cx="821.4" cy="211.2" r="4.5" fill="#eee" stroke="#9a9a9a" stroke-width="0.8"/>
<rect x="819.6" y="209.4" width="3.6" height="3.6" fill="none" stroke="#aaa" stroke-width="0.6"/>
<rect x="824.3" y="213.3" width="5" height="4.8" fill="#5aa2ea"/>
<polygon points="821.8,222 824,222 822.9,223.6" fill="#b36a5a"/>
<line x1="815.5" y1="226.4" x2="830.5" y2="226.4" stroke="#d0d0d0" stroke-width="0.6"/>
<rect x="819.3" y="230.7" width="5.2" height="5.6" fill="#8fba72"/>
<circle cx="825.6" cy="237.2" r="1.5" fill="#f3f3f3" stroke="#888" stroke-width="0.6"/>
<polygon points="821.8,244.6 824,244.6 822.9,246.2" fill="#777"/>
<circle cx="828.6" cy="198.9" r="1.6" fill="none" stroke="#aaa" stroke-width="0.6"/>
<circle cx="828.6" cy="253.6" r="1.6" fill="none" stroke="#aaa" stroke-width="0.6"/>
</svg>
</div>

<div id="vscroll" class="a">
<svg style="left:2.400px;top:3.400px" width="4.400" height="3" viewBox="0 0 4.400 3"><path d="M0.300 2.600L2.200 0.600 4.100 2.600" fill="none" stroke="#444" stroke-width="0.900"/></svg>
<div class="a" style="left:0.600px;top:212.800px;width:8px;height:9.200px;background:#c9c9c9"></div>
<svg style="left:2.400px;top:428px" width="4.400" height="3" viewBox="0 0 4.400 3"><path d="M0.300 0.400L2.200 2.400 4.100 0.400" fill="none" stroke="#444" stroke-width="0.900"/></svg>
</div>
<div id="vctl" class="a"><span class="a x" style="left:14.400px;top:1.400px;color:#1e1e1e">1 : 100</span>
<svg style="left:0;top:0" width="652" height="10" viewBox="190 536.400 652 10">
<rect x="233" y="538" width="8.400" height="6" fill="#e4e4e4" stroke="#666" stroke-width="0.800"/><path d="M233 540h8.400M235.800 538v6M238.600 538v6" stroke="#888" stroke-width="0.500"/>
<path d="M245.400 539.600h5.400v4.600h-5.400zM245.400 539.600l1.800-1.600h5.400l-1.800 1.600M252.600 538v4.600l-1.800 1.600" fill="#d6e8fa" stroke="#2a78d0" stroke-width="0.800" stroke-linejoin="round"/>
<path d="M256 541.600l3-3 3 3v2.600h-6z" fill="#5a9ae0" stroke="#2a68c0" stroke-width="0.500"/><path d="M259.200 540.400l3.600 3.600M262.800 540.400l-3.600 3.600" stroke="#e03a2a" stroke-width="1.100"/>
<path d="M267.400 541.600l3-3 3 3v2.600h-6z" fill="#5a9ae0" stroke="#2a68c0" stroke-width="0.500"/><circle cx="272.600" cy="541" r="1.900" fill="#cfe2f6" stroke="#3a78c8" stroke-width="0.600"/>
<path d="M278.200 541.200l3.400-3 3.400 3v3h-6.800z" fill="#f0f0f0" stroke="#333" stroke-width="0.900"/><circle cx="281.600" cy="541.800" r="1.500" fill="#444"/><circle cx="284.400" cy="543.800" r="1.100" fill="#5aa84a"/>
<path d="M290 541.400c1-2.600 5-2.600 6 0c0.400 1.600-1.600 2.800-3 2-1.200-0.800-0.600-2.400 0.800-2" fill="none" stroke="#666" stroke-width="0.900"/>
<path d="M300.400 538.600h2M300.400 538.600v2M300.400 544.200v-1.600M300.400 544.200h2" stroke="#666" stroke-width="0.700" fill="none"/><rect x="303.400" y="539" width="4.600" height="4.600" fill="#9a9a9a"/>
<rect x="311.400" y="538.400" width="7.600" height="5.600" fill="#e4e4e4" stroke="#777" stroke-width="0.700"/><rect x="314.400" y="541" width="3.600" height="2.400" fill="#5a9ae0"/>
<path d="M327 539.400l-2.200 2.200 2.200 2.200" fill="none" stroke="#333" stroke-width="0.900"/>
<path d="M826.400 539.400l2.200 2.200-2.200 2.200" fill="none" stroke="#444" stroke-width="0.900"/>
<rect x="572" y="537.400" width="10.400" height="8.200" fill="#cdcdcd"/>
</svg></div>
<div id="gap2" class="a"></div>
<div id="pb" class="a">
<div class="a hd"><span class="a x" style="left:2px;top:2.800px;color:#1e1e1e">Project Browser - Estructural.rvt</span>
<svg style="left:171.600px;top:3.400px" width="5" height="5" viewBox="0 0 5 5"><path d="M0.400 0.400L4.600 4.600M4.600 0.400L0.400 4.600" stroke="#222" stroke-width="1.100"/></svg></div>
<div class="a" style="left:34.600px;top:40.30px;width:70.400px;height:9px;background:#ebebeb"></div>
<i class="vd" style="left:5.4px;top:19.5px;height:227.8px"></i><i class="vd" style="left:15.4px;top:29.1px;height:179.8px"></i><i class="vd" style="left:25.4px;top:29.1px;height:64.6px"></i><i class="vd" style="left:25.4px;top:134.7px;height:16.6px"></i><i class="vd" style="left:25.4px;top:163.5px;height:35.8px"></i><i class="vd" style="left:15.4px;top:249.9px;height:204.0px"></i>
<div class="a tr" style="top:11.90px"><svg class="bx" style="left:3.2px" viewBox="0 0 4.800 4.800"><rect x="0.300" y="0.300" width="4.200" height="4.200" fill="#fff" stroke="#a8a8a8" stroke-width="0.600"/><path d="M1.200 2.400h2.400" stroke="#444" stroke-width="0.600"/></svg><i class="dot" style="left:8.200px;width:2.600px"></i><svg style="left:11.200px;top:1.200px" width="8" height="7.400" viewBox="0 0 8 7.400"><path d="M1.800 0.500H0.500v6.400h1.300M6.200 0.500h1.300v6.400H6.200" fill="none" stroke="#666" stroke-width="0.600" stroke-dasharray="1 0.6"/><circle cx="4" cy="3.700" r="1.700" fill="none" stroke="#555" stroke-width="0.700"/></svg><span class="l1">Views (all)</span></div>
<div class="a tr" style="top:21.50px"><svg class="bx" style="left:13.2px" viewBox="0 0 4.800 4.800"><rect x="0.300" y="0.300" width="4.200" height="4.200" fill="#fff" stroke="#a8a8a8" stroke-width="0.600"/><path d="M1.200 2.400h2.400" stroke="#444" stroke-width="0.600"/></svg><i class="dot" style="left:18.400px;width:4.600px"></i><span class="l2">Structural Plans</span></div>
<div class="a tr" style="top:31.10px"><i class="dot" style="left:25.600px;width:8px"></i><span class="l3" style="letter-spacing:-0.3px">CIELO 1° PISO</span></div>
<div class="a tr" style="top:40.70px"><i class="dot" style="left:25.600px;width:8px"></i><span class="l3" style="letter-spacing:-0.4px">CIELO 1° SUBTERRANEO</span></div>
<div class="a tr" style="top:50.30px"><i class="dot" style="left:25.600px;width:8px"></i><span class="l3" style="letter-spacing:-0.3px">CIELO 2° PISO</span></div>
<div class="a tr" style="top:59.90px"><i class="dot" style="left:25.600px;width:8px"></i><span class="l3" style="letter-spacing:-0.3px">CIELO 3° PISO</span></div>
<div class="a tr" style="top:69.50px"><i class="dot" style="left:25.600px;width:8px"></i><span class="l3" style="letter-spacing:-0.3px">CIELO 5° PISO</span></div>
<div class="a tr" style="top:79.10px"><i class="dot" style="left:25.600px;width:8px"></i><span class="l3" style="letter-spacing:-0.2px">CIELO SALA DE MAQUINAS</span></div>
<div class="a tr" style="top:88.70px"><i class="dot" style="left:25.600px;width:8px"></i><span class="l3" style="letter-spacing:0px">Site</span></div>
<div class="a tr" style="top:98.30px"><svg class="bx" style="left:13.2px" viewBox="0 0 4.800 4.800"><rect x="0.300" y="0.300" width="4.200" height="4.200" fill="#fff" stroke="#a8a8a8" stroke-width="0.600"/><path d="M1.200 2.400h2.400M2.400 1.200v2.400" stroke="#444" stroke-width="0.600"/></svg><i class="dot" style="left:18.400px;width:4.600px"></i><span class="l2">Structural Plans (Structural Plan_Fundaciones)</span></div>
<div class="a tr" style="top:107.90px"><svg class="bx" style="left:13.2px" viewBox="0 0 4.800 4.800"><rect x="0.300" y="0.300" width="4.200" height="4.200" fill="#fff" stroke="#a8a8a8" stroke-width="0.600"/><path d="M1.200 2.400h2.400M2.400 1.200v2.400" stroke="#444" stroke-width="0.600"/></svg><i class="dot" style="left:18.400px;width:4.600px"></i><span class="l2">Floor Plans</span></div>
<div class="a tr" style="top:117.50px"><svg class="bx" style="left:13.2px" viewBox="0 0 4.800 4.800"><rect x="0.300" y="0.300" width="4.200" height="4.200" fill="#fff" stroke="#a8a8a8" stroke-width="0.600"/><path d="M1.200 2.400h2.400M2.400 1.200v2.400" stroke="#444" stroke-width="0.600"/></svg><i class="dot" style="left:18.400px;width:4.600px"></i><span class="l2">Ceiling Plans</span></div>
<div class="a tr" style="top:127.10px"><svg class="bx" style="left:13.2px" viewBox="0 0 4.800 4.800"><rect x="0.300" y="0.300" width="4.200" height="4.200" fill="#fff" stroke="#a8a8a8" stroke-width="0.600"/><path d="M1.200 2.400h2.400" stroke="#444" stroke-width="0.600"/></svg><i class="dot" style="left:18.400px;width:4.600px"></i><span class="l2">3D Views</span></div>
<div class="a tr" style="top:136.70px"><i class="dot" style="left:25.600px;width:8px"></i><span class="l3" style="letter-spacing:0px">Analytical Model</span></div>
<div class="a tr" style="top:146.30px"><i class="dot" style="left:25.600px;width:8px"></i><span class="l3" style="font-weight:bold">{3D}</span></div>
<div class="a tr" style="top:155.90px"><svg class="bx" style="left:13.2px" viewBox="0 0 4.800 4.800"><rect x="0.300" y="0.300" width="4.200" height="4.200" fill="#fff" stroke="#a8a8a8" stroke-width="0.600"/><path d="M1.200 2.400h2.400" stroke="#444" stroke-width="0.600"/></svg><i class="dot" style="left:18.400px;width:4.600px"></i><span class="l2">Elevations (Building Elevation)</span></div>
<div class="a tr" style="top:165.50px"><i class="dot" style="left:25.600px;width:8px"></i><span class="l3" style="letter-spacing:0px">East</span></div>
<div class="a tr" style="top:175.10px"><i class="dot" style="left:25.600px;width:8px"></i><span class="l3" style="letter-spacing:0px">North</span></div>
<div class="a tr" style="top:184.70px"><i class="dot" style="left:25.600px;width:8px"></i><span class="l3" style="letter-spacing:0px">South</span></div>
<div class="a tr" style="top:194.30px"><i class="dot" style="left:25.600px;width:8px"></i><span class="l3" style="letter-spacing:0px">West</span></div>
<div class="a tr" style="top:203.90px"><svg class="bx" style="left:13.2px" viewBox="0 0 4.800 4.800"><rect x="0.300" y="0.300" width="4.200" height="4.200" fill="#fff" stroke="#a8a8a8" stroke-width="0.600"/><path d="M1.200 2.400h2.400M2.400 1.200v2.400" stroke="#444" stroke-width="0.600"/></svg><i class="dot" style="left:18.400px;width:4.600px"></i><span class="l2">Sections (Building Section)</span></div>
<div class="a tr" style="top:213.50px"><i class="dot" style="left:8.200px;width:2.600px"></i><svg style="left:11.200px;top:1.200px" width="8" height="7.400" viewBox="0 0 8 7.400"><rect x="0.400" y="0.400" width="7.200" height="6.600" fill="#e4e4e4" stroke="#444" stroke-width="0.800"/><rect x="0.800" y="0.800" width="2.600" height="2.600" fill="#555"/><path d="M0.400 3.800h7.200M3.800 3.800v3.200" stroke="#555" stroke-width="0.600"/></svg><span class="l1">Legends</span></div>
<div class="a tr" style="top:223.10px"><i class="dot" style="left:8.200px;width:2.600px"></i><svg style="left:11.200px;top:1.200px" width="8" height="7.400" viewBox="0 0 8 7.400"><rect x="0.400" y="0.400" width="7.200" height="6.600" fill="#ececec" stroke="#444" stroke-width="0.800"/><path d="M0.400 2.400h7.200" stroke="#444" stroke-width="1.200"/><path d="M2.800 2.400v4.600M0.400 4.800h7.200" stroke="#777" stroke-width="0.500"/></svg><span class="l1">Schedules/Quantities (all)</span></div>
<div class="a tr" style="top:232.70px"><i class="dot" style="left:8.200px;width:2.600px"></i><svg style="left:11.200px;top:1.200px" width="8" height="7.400" viewBox="0 0 8 7.400"><path d="M0.400 0.400h5l2.200 2v4.600h-7.200z" fill="#f0f0f0" stroke="#555" stroke-width="0.700"/><path d="M1.600 5.400h4.800M4.600 3.400h1.800" stroke="#777" stroke-width="0.600"/></svg><span class="l1">Sheets (all)</span></div>
<div class="a tr" style="top:242.30px"><svg class="bx" style="left:3.2px" viewBox="0 0 4.800 4.800"><rect x="0.300" y="0.300" width="4.200" height="4.200" fill="#fff" stroke="#a8a8a8" stroke-width="0.600"/><path d="M1.200 2.400h2.400" stroke="#444" stroke-width="0.600"/></svg><i class="dot" style="left:8.200px;width:2.600px"></i><svg style="left:11.200px;top:1.200px" width="8" height="7.400" viewBox="0 0 8 7.400"><rect x="0.400" y="0.400" width="7.200" height="6.600" fill="#efefef" stroke="#555" stroke-width="0.700"/><rect x="1.400" y="1.200" width="2.400" height="2.400" fill="none" stroke="#555" stroke-width="0.600"/><path d="M4.800 1.400h2M1.400 5.200h5" stroke="#777" stroke-width="0.600"/></svg><span class="l1">Families</span></div>
<div class="a tr" style="top:251.90px"><svg class="bx" style="left:13.2px" viewBox="0 0 4.800 4.800"><rect x="0.300" y="0.300" width="4.200" height="4.200" fill="#fff" stroke="#a8a8a8" stroke-width="0.600"/><path d="M1.200 2.400h2.400M2.400 1.200v2.400" stroke="#444" stroke-width="0.600"/></svg><i class="dot" style="left:18.400px;width:4.600px"></i><span class="l2">Analytical Links</span></div>
<div class="a tr" style="top:261.50px"><svg class="bx" style="left:13.2px" viewBox="0 0 4.800 4.800"><rect x="0.300" y="0.300" width="4.200" height="4.200" fill="#fff" stroke="#a8a8a8" stroke-width="0.600"/><path d="M1.200 2.400h2.400M2.400 1.200v2.400" stroke="#444" stroke-width="0.600"/></svg><i class="dot" style="left:18.400px;width:4.600px"></i><span class="l2">Annotation Symbols</span></div>
<div class="a tr" style="top:271.10px"><svg class="bx" style="left:13.2px" viewBox="0 0 4.800 4.800"><rect x="0.300" y="0.300" width="4.200" height="4.200" fill="#fff" stroke="#a8a8a8" stroke-width="0.600"/><path d="M1.200 2.400h2.400M2.400 1.200v2.400" stroke="#444" stroke-width="0.600"/></svg><i class="dot" style="left:18.400px;width:4.600px"></i><span class="l2">Boundary Conditions</span></div>
<div class="a tr" style="top:280.70px"><svg class="bx" style="left:13.2px" viewBox="0 0 4.800 4.800"><rect x="0.300" y="0.300" width="4.200" height="4.200" fill="#fff" stroke="#a8a8a8" stroke-width="0.600"/><path d="M1.200 2.400h2.400M2.400 1.200v2.400" stroke="#444" stroke-width="0.600"/></svg><i class="dot" style="left:18.400px;width:4.600px"></i><span class="l2">Cable Trays</span></div>
<div class="a tr" style="top:290.30px"><svg class="bx" style="left:13.2px" viewBox="0 0 4.800 4.800"><rect x="0.300" y="0.300" width="4.200" height="4.200" fill="#fff" stroke="#a8a8a8" stroke-width="0.600"/><path d="M1.200 2.400h2.400M2.400 1.200v2.400" stroke="#444" stroke-width="0.600"/></svg><i class="dot" style="left:18.400px;width:4.600px"></i><span class="l2">Ceilings</span></div>
<div class="a tr" style="top:299.90px"><svg class="bx" style="left:13.2px" viewBox="0 0 4.800 4.800"><rect x="0.300" y="0.300" width="4.200" height="4.200" fill="#fff" stroke="#a8a8a8" stroke-width="0.600"/><path d="M1.200 2.400h2.400M2.400 1.200v2.400" stroke="#444" stroke-width="0.600"/></svg><i class="dot" style="left:18.400px;width:4.600px"></i><span class="l2">Conduits</span></div>
<div class="a tr" style="top:309.50px"><svg class="bx" style="left:13.2px" viewBox="0 0 4.800 4.800"><rect x="0.300" y="0.300" width="4.200" height="4.200" fill="#fff" stroke="#a8a8a8" stroke-width="0.600"/><path d="M1.200 2.400h2.400M2.400 1.200v2.400" stroke="#444" stroke-width="0.600"/></svg><i class="dot" style="left:18.400px;width:4.600px"></i><span class="l2">Curtain Panels</span></div>
<div class="a tr" style="top:319.10px"><svg class="bx" style="left:13.2px" viewBox="0 0 4.800 4.800"><rect x="0.300" y="0.300" width="4.200" height="4.200" fill="#fff" stroke="#a8a8a8" stroke-width="0.600"/><path d="M1.200 2.400h2.400M2.400 1.200v2.400" stroke="#444" stroke-width="0.600"/></svg><i class="dot" style="left:18.400px;width:4.600px"></i><span class="l2">Curtain Systems</span></div>
<div class="a tr" style="top:328.70px"><svg class="bx" style="left:13.2px" viewBox="0 0 4.800 4.800"><rect x="0.300" y="0.300" width="4.200" height="4.200" fill="#fff" stroke="#a8a8a8" stroke-width="0.600"/><path d="M1.200 2.400h2.400M2.400 1.200v2.400" stroke="#444" stroke-width="0.600"/></svg><i class="dot" style="left:18.400px;width:4.600px"></i><span class="l2">Curtain Wall Mullions</span></div>
<div class="a tr" style="top:338.30px"><svg class="bx" style="left:13.2px" viewBox="0 0 4.800 4.800"><rect x="0.300" y="0.300" width="4.200" height="4.200" fill="#fff" stroke="#a8a8a8" stroke-width="0.600"/><path d="M1.200 2.400h2.400M2.400 1.200v2.400" stroke="#444" stroke-width="0.600"/></svg><i class="dot" style="left:18.400px;width:4.600px"></i><span class="l2">Detail Items</span></div>
<div class="a tr" style="top:347.90px"><svg class="bx" style="left:13.2px" viewBox="0 0 4.800 4.800"><rect x="0.300" y="0.300" width="4.200" height="4.200" fill="#fff" stroke="#a8a8a8" stroke-width="0.600"/><path d="M1.200 2.400h2.400M2.400 1.200v2.400" stroke="#444" stroke-width="0.600"/></svg><i class="dot" style="left:18.400px;width:4.600px"></i><span class="l2">Division Profiles</span></div>
<div class="a tr" style="top:357.50px"><svg class="bx" style="left:13.2px" viewBox="0 0 4.800 4.800"><rect x="0.300" y="0.300" width="4.200" height="4.200" fill="#fff" stroke="#a8a8a8" stroke-width="0.600"/><path d="M1.200 2.400h2.400M2.400 1.200v2.400" stroke="#444" stroke-width="0.600"/></svg><i class="dot" style="left:18.400px;width:4.600px"></i><span class="l2">Doors</span></div>
<div class="a tr" style="top:367.10px"><svg class="bx" style="left:13.2px" viewBox="0 0 4.800 4.800"><rect x="0.300" y="0.300" width="4.200" height="4.200" fill="#fff" stroke="#a8a8a8" stroke-width="0.600"/><path d="M1.200 2.400h2.400M2.400 1.200v2.400" stroke="#444" stroke-width="0.600"/></svg><i class="dot" style="left:18.400px;width:4.600px"></i><span class="l2">Duct Systems</span></div>
<div class="a tr" style="top:376.70px"><svg class="bx" style="left:13.2px" viewBox="0 0 4.800 4.800"><rect x="0.300" y="0.300" width="4.200" height="4.200" fill="#fff" stroke="#a8a8a8" stroke-width="0.600"/><path d="M1.200 2.400h2.400M2.400 1.200v2.400" stroke="#444" stroke-width="0.600"/></svg><i class="dot" style="left:18.400px;width:4.600px"></i><span class="l2">Ducts</span></div>
<div class="a tr" style="top:386.30px"><svg class="bx" style="left:13.2px" viewBox="0 0 4.800 4.800"><rect x="0.300" y="0.300" width="4.200" height="4.200" fill="#fff" stroke="#a8a8a8" stroke-width="0.600"/><path d="M1.200 2.400h2.400M2.400 1.200v2.400" stroke="#444" stroke-width="0.600"/></svg><i class="dot" style="left:18.400px;width:4.600px"></i><span class="l2">Flex Ducts</span></div>
<div class="a tr" style="top:395.90px"><svg class="bx" style="left:13.2px" viewBox="0 0 4.800 4.800"><rect x="0.300" y="0.300" width="4.200" height="4.200" fill="#fff" stroke="#a8a8a8" stroke-width="0.600"/><path d="M1.200 2.400h2.400M2.400 1.200v2.400" stroke="#444" stroke-width="0.600"/></svg><i class="dot" style="left:18.400px;width:4.600px"></i><span class="l2">Flex Pipes</span></div>
<div class="a tr" style="top:405.50px"><svg class="bx" style="left:13.2px" viewBox="0 0 4.800 4.800"><rect x="0.300" y="0.300" width="4.200" height="4.200" fill="#fff" stroke="#a8a8a8" stroke-width="0.600"/><path d="M1.200 2.400h2.400M2.400 1.200v2.400" stroke="#444" stroke-width="0.600"/></svg><i class="dot" style="left:18.400px;width:4.600px"></i><span class="l2">Floors</span></div>
<div class="a tr" style="top:415.10px"><svg class="bx" style="left:13.2px" viewBox="0 0 4.800 4.800"><rect x="0.300" y="0.300" width="4.200" height="4.200" fill="#fff" stroke="#a8a8a8" stroke-width="0.600"/><path d="M1.200 2.400h2.400M2.400 1.200v2.400" stroke="#444" stroke-width="0.600"/></svg><i class="dot" style="left:18.400px;width:4.600px"></i><span class="l2">Pattern</span></div>
<div class="a tr" style="top:424.70px"><svg class="bx" style="left:13.2px" viewBox="0 0 4.800 4.800"><rect x="0.300" y="0.300" width="4.200" height="4.200" fill="#fff" stroke="#a8a8a8" stroke-width="0.600"/><path d="M1.200 2.400h2.400M2.400 1.200v2.400" stroke="#444" stroke-width="0.600"/></svg><i class="dot" style="left:18.400px;width:4.600px"></i><span class="l2">Pipes</span></div>
<div class="a tr" style="top:434.30px"><svg class="bx" style="left:13.2px" viewBox="0 0 4.800 4.800"><rect x="0.300" y="0.300" width="4.200" height="4.200" fill="#fff" stroke="#a8a8a8" stroke-width="0.600"/><path d="M1.200 2.400h2.400M2.400 1.200v2.400" stroke="#444" stroke-width="0.600"/></svg><i class="dot" style="left:18.400px;width:4.600px"></i><span class="l2">Piping Systems</span></div>
<div class="a tr" style="top:443.90px"><svg class="bx" style="left:13.2px" viewBox="0 0 4.800 4.800"><rect x="0.300" y="0.300" width="4.200" height="4.200" fill="#fff" stroke="#a8a8a8" stroke-width="0.600"/><path d="M1.200 2.400h2.400M2.400 1.200v2.400" stroke="#444" stroke-width="0.600"/></svg><i class="dot" style="left:18.400px;width:4.600px"></i><span class="l2">Profiles</span></div>
<div class="a" style="left:171.400px;top:11.600px;width:7.600px;height:443px;background:#f0f0f0"></div>
<div class="a" style="left:171.400px;top:20.600px;width:7.600px;height:297px;background:#cdcdcd"></div>
<svg style="left:173px;top:14.600px" width="4.400" height="3" viewBox="0 0 4.400 3"><path d="M0.300 2.600L2.200 0.600 4.100 2.600" fill="none" stroke="#444" stroke-width="0.900"/></svg>
<svg style="left:173px;top:449.400px" width="4.400" height="3" viewBox="0 0 4.400 3"><path d="M0.300 0.400L2.200 2.400 4.100 0.400" fill="none" stroke="#444" stroke-width="0.900"/></svg>
</div>
<div id="status" class="a"><span class="a x" style="left:2px;top:3.600px;color:#1e1e1e;letter-spacing:-0.07px">Click to select, TAB for alternates, CTRL adds, SHIFT unselects.</span>
<svg style="left:0;top:0" width="1024" height="13.400" viewBox="0 546.600 1024 13.400">
<rect x="889.600" y="550.400" width="6.400" height="3.400" fill="#f0c030" stroke="#b88a10" stroke-width="0.500"/><path d="M893.400 553.400v3.600l1-0.800 0.800 1.600" stroke="#333" stroke-width="0.600" fill="none"/>
<path d="M903.400 555.600l3-4.400h4.400v4.400z" fill="#e8f0fa" stroke="#2a68c0" stroke-width="0.800"/><path d="M908.400 550l3 3M911.400 550l-3 3" stroke="#e03a2a" stroke-width="1"/><path d="M907.800 554.400v3l0.900-0.700 0.700 1.400" stroke="#333" stroke-width="0.600" fill="none"/>
<path d="M918 556v-5.400h3v5.400M922.400 556v-3.400h2.400v3.400" fill="none" stroke="#e88a30" stroke-width="1"/><path d="M922.400 554.400v3l0.900-0.700 0.700 1.400" stroke="#333" stroke-width="0.600" fill="none"/>
<path d="M931.600 556.400v-5h5" fill="none" stroke="#2a68c0" stroke-width="1.200"/><path d="M935.600 550l3 3M938.600 550l-3 3" stroke="#e03a2a" stroke-width="1"/><path d="M935.400 554.400v3l0.900-0.700 0.700 1.400" stroke="#333" stroke-width="0.600" fill="none"/>
<path d="M947 550.400v4M945 552.400h4" stroke="#222" stroke-width="0.900"/><path d="M949.200 553.400v4.200l1.100-0.900 0.900 1.700 0.800-0.400-0.900-1.600h1.400z" fill="#f4f4f4" stroke="#222" stroke-width="0.500"/>
<circle cx="963" cy="554.200" r="2.700" fill="#d4d4d4" stroke="#b4b4b4" stroke-width="0.900"/>
<path d="M971 551h8.600l-3.200 3.600v3.400l-2.200-1v-2.400z" fill="#dce6f2" stroke="#555" stroke-width="0.700" stroke-linejoin="round"/>
</svg><span class="a x" style="left:980.600px;top:4.200px;color:#333;font-size:5.600px">:1</span></div>
</body>
</html>
